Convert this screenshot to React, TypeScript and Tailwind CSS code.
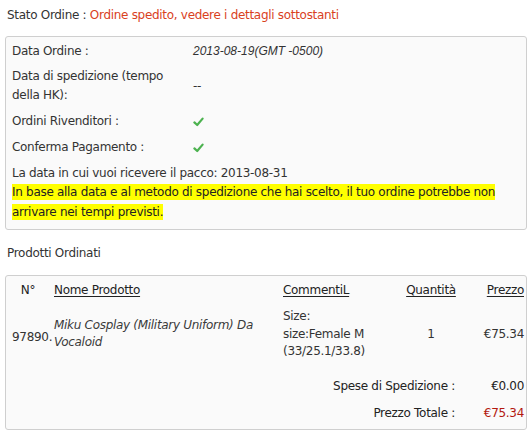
function Check() {
  return (
    <svg width="11" height="10" viewBox="0 0 11 10" className="mt-[2px]">
      <path
        d="M1.4 5.4 L4.2 8 L9.6 1.6"
        fill="none"
        stroke="#4cb24f"
        strokeWidth="2.2"
        strokeLinecap="round"
        strokeLinejoin="round"
      />
    </svg>
  );
}

export default function App() {
  const orderInfo = [
    { label: "Data Ordine :", value: "2013-08-19(GMT -0500)", type: "date" },
    { label: "Data di spedizione (tempo della HK):", value: "--", type: "text" },
    { label: "Ordini Rivenditori :", type: "check" },
    { label: "Conferma Pagamento :", type: "check" },
  ];

  return (
    <div className="w-[530px] h-[432px] bg-white text-[12px] tracking-[-0.3px] text-[#333] font-['DejaVu_Sans',sans-serif] overflow-hidden">
      {/* stato ordine */}
      <p className="pt-[5px] pl-[7px] leading-[20px]">
        Stato Ordine : <span className="text-[#d9411e]">Ordine spedito, vedere i dettagli sottostanti</span>
      </p>

      <div className="mt-[11px] ml-[5px] mr-[3px] border border-[#cfcfcf] rounded-[3px] bg-[#fafafa] px-[6px] pt-[1px] pb-[7px]">
        {orderInfo.map((row, idx) => (
          <div
            key={idx}
            className={
              "grid grid-cols-[181px_1fr] items-center py-[3px] " +
              (idx === 1 ? "leading-[19px]" : "leading-[20px]")
            }
          >
            <div className="pr-[10px]">{row.label}</div>
            <div>
              {row.type === "date" && (
                <span className="italic font-['Liberation_Sans',sans-serif] tracking-normal">
                  {row.value}
                </span>
              )}
              {row.type === "text" && <span>{row.value}</span>}
              {row.type === "check" && <Check />}
            </div>
          </div>
        ))}
        <p className="pt-[3px] leading-[20px]">
          La data in cui vuoi ricevere il pacco: 2013-08-31
        </p>
        <p className="leading-[20px] -mt-[1px]">
          <span className="bg-[#ffff00] text-[#222] py-[1px]">
            In base alla data e al metodo di spedizione che hai scelto, il tuo ordine potrebbe non
            arrivare nei tempi previsti.
          </span>
        </p>
      </div>

      {/* prodotti */}
      <p className="mt-[13px] pl-[7px] leading-[20px]">Prodotti Ordinati</p>

      <div className="mt-[12px] ml-[5px] mr-[3px] border border-[#cfcfcf] rounded-[3px] bg-[#fafafa] pr-[2px] pt-[6px] pb-[6px]">
        <div className="grid grid-cols-[44px_225px_117px_54px_1fr] gap-x-[4px] leading-[16px] text-[#222]">
          <div className="text-center">N°</div>
          <div className="underline underline-offset-2">Nome Prodotto</div>
          <div className="underline underline-offset-2">CommentiL</div>
          <div className="text-center underline underline-offset-2">Quantità</div>
          <div className="text-right underline underline-offset-2">Prezzo</div>
        </div>

        <div className="mt-[10px] grid grid-cols-[44px_225px_117px_54px_1fr] gap-x-[4px] items-center text-[#333]">
          <div className="pl-[6px] pt-[6px] leading-[16px]">97890.</div>
          <div className="italic text-[#3a3a3a] leading-[17px]">
            Miku Cosplay (Military Uniform) Da Vocaloid
          </div>
          <div className="leading-[17.5px]">
            <div>Size:</div>
            <div>size:Female M</div>
            <div>(33/25.1/33.8)</div>
          </div>
          <div className="text-center">1</div>
          <div className="text-right">€75.34</div>
        </div>

        <div className="mt-[15px] flex justify-end gap-[7px] leading-[20px] text-[#222]">
          <span>Spese di Spedizione :</span>
          <span className="w-[62px] text-right">€0.00</span>
        </div>
        <div className="mt-[7px] flex justify-end gap-[7px] leading-[20px] text-[#222]">
          <span>Prezzo Totale :</span>
          <span className="w-[62px] text-right text-[#b3170e]">€75.34</span>
        </div>
      </div>
    </div>
  );
}
